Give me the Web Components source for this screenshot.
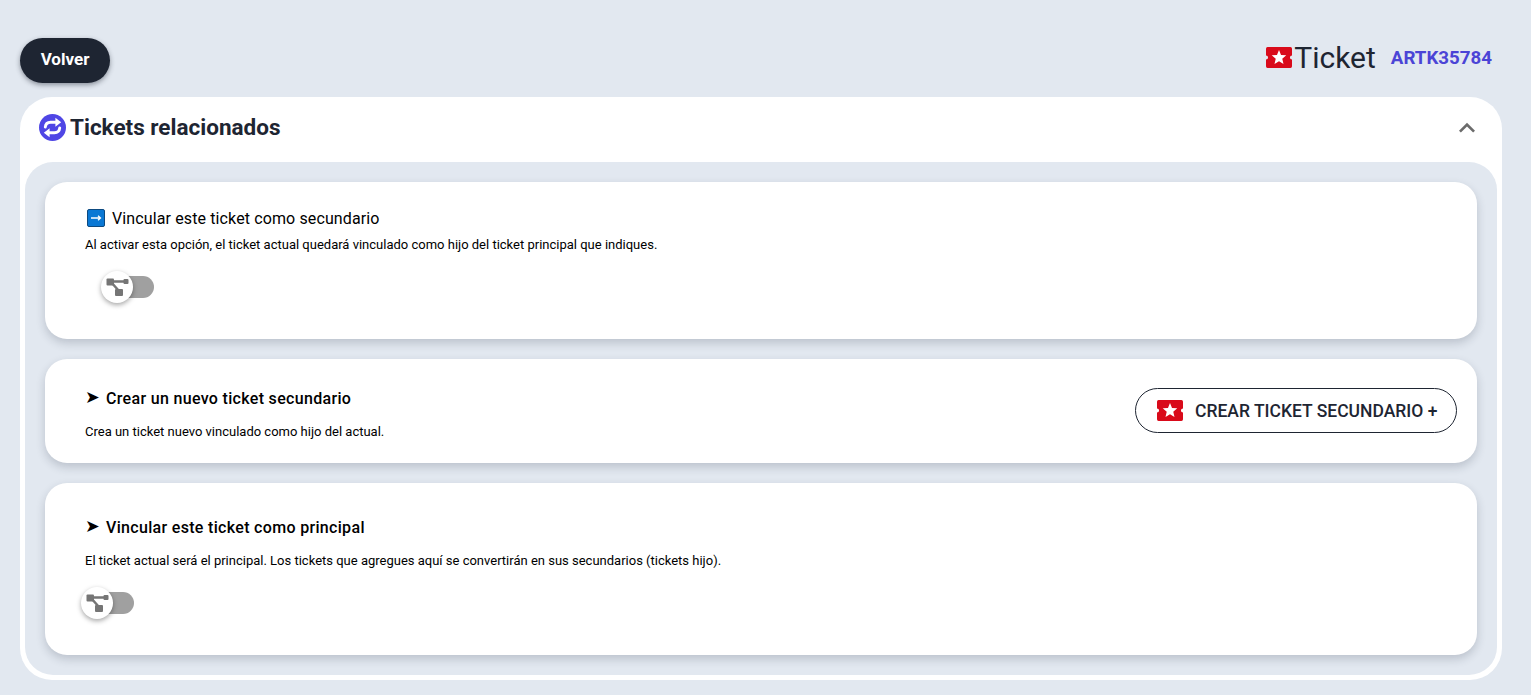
<!DOCTYPE html>
<html lang="es">
<head>
<meta charset="utf-8">
<title>Tickets relacionados</title>
<style>
    html, body { margin: 0; height: 100%; }
    body { background: #e2e8f0; font-family: Roboto, "Liberation Sans", sans-serif; color: #1e2532; overflow: hidden; }
</style>
</head>
<body>
<ticket-page>
    <page-header slot="header" code="ARTK35784"></page-header>
    <related-panel slot="panel" title="Tickets relacionados">
        <link-card heading="Vincular este ticket como secundario" marker="arrow" text="Al activar esta opción, el ticket actual quedará vinculado como hijo del ticket principal que indiques." height="157" top="26" gap="9">
            <link-switch slot="below" shift="21" space="23"></link-switch>
        </link-card>
        <link-card heading="Crear un nuevo ticket secundario" marker="point" text="Crea un ticket nuevo vinculado como hijo del actual." height="104" top="29" gap="16">
            <create-button slot="action"></create-button>
        </link-card>
        <link-card heading="Vincular este ticket como principal" marker="point" text="El ticket actual será el principal. Los tickets que agregues aquí se convertirán en sus secundarios (tickets hijo)." height="172" top="34" gap="16">
            <link-switch slot="below" shift="1" space="23"></link-switch>
        </link-card>
    </related-panel>
</ticket-page>

<script>
const ticketSvg = size => `
    <svg width="${size}" height="${Math.round(size * 0.8)}" viewBox="0 0 25 20" aria-hidden="true" style="display:block;flex:none">
        <path fill="#d90a1a" d="M1.500 0h22a1.500 1.500 0 0 1 1.500 1.500v6.500a2 2 0 0 0 0 4v6.500a1.500 1.500 0 0 1-1.500 1.500h-22A1.500 1.500 0 0 1 0 18.500v-6.500a2 2 0 0 0 0-4v-6.500A1.500 1.500 0 0 1 1.500 0z"/>
        <path fill="#fff" d="M12.500 2.800l1.950 4.700 5.050.4-3.850 3.300 1.180 4.950-4.330-2.650-4.330 2.650 1.180-4.950-3.850-3.300 5.050-.4z"/>
    </svg>`;

class TicketPage extends HTMLElement {
    constructor() {
        super();
        this.attachShadow({ mode: 'open' });
        this.shadowRoot.innerHTML = `
            <style>
                :host { display: flex; flex-direction: column; gap: 14px; padding: 38px 29px 0 20px; }
            </style>
            <slot name="header"></slot>
            <slot name="panel"></slot>
        `;
    }
}

class PageHeader extends HTMLElement {
    constructor() {
        super();
        this.attachShadow({ mode: 'open' });
    }

    connectedCallback() {
        this.shadowRoot.innerHTML = `
            <style>
                :host { display: flex; justify-content: space-between; align-items: flex-start; height: 45px; }
                button {
                    width: 90px; height: 45px; border: 0; border-radius: 23px; padding: 0 0 4px;
                    background: #1e2532; color: #fff; font: 700 17px Roboto, sans-serif;
                    box-shadow: 0 2px 5px rgba(30, 37, 50, .45);
                }
                .title { display: flex; align-items: center; height: 39px; margin-right: 10px; }
                .word { font-size: 30px; font-weight: 400; margin-left: 2px; color: #1e2532; }
                .code { font-size: 18.72px; font-weight: 700; color: #4b44d6; margin-left: 15px; }
            </style>
            <button>Volver</button>
            <div class="title">
                ${ticketSvg(26)}
                <span class="word">Ticket</span>
                <span class="code">${this.getAttribute('code')}</span>
            </div>
        `;
    }
}

class RelatedPanel extends HTMLElement {
    constructor() {
        super();
        this.attachShadow({ mode: 'open' });
    }

    connectedCallback() {
        this.shadowRoot.innerHTML = `
            <style>
                :host { display: block; background: #fff; border-radius: 32px; padding: 0 5px 5px; height: 578px; }
                header { display: flex; align-items: center; height: 61px; margin-bottom: 4px; padding: 0 14px 0 14px; }
                h2 { margin: 0 0 0 4px; font-size: 22.500px; font-weight: 700; color: #1e2532; flex: 1; line-height: 1; }
                .body {
                    display: flex; flex-direction: column; gap: 20px;
                    height: 513px; box-sizing: border-box;
                    background: #e2e8f0; border-radius: 28px; padding: 20px;
                }
            </style>
            <header>
                <svg width="27" height="27" viewBox="0 0 28 28" aria-hidden="true">
                    <circle cx="14" cy="14" r="14" fill="#4f46e5"/>
                    <path fill="none" stroke="#fff" stroke-width="3" stroke-linecap="round" d="M6.500 13.500c.3-3.200 2.600-5 5.500-5h6M21.500 14.500c-.3 3.200-2.600 5-5.500 5h-6"/>
                    <path fill="#fff" d="M17 3.800l6 4.700-6 4.700zM11 14.800l-6 4.700 6 4.700z"/>
                </svg>
                <h2>${this.getAttribute('title')}</h2>
                <svg width="32" height="32" viewBox="0 0 24 24" aria-hidden="true">
                    <path fill="#6b6b6b" d="M12 8l-6 6 1.410 1.410L12 10.830l4.590 4.580L18 14z"/>
                </svg>
            </header>
            <div class="body"><slot></slot></div>
        `;
    }
}

class LinkCard extends HTMLElement {
    constructor() {
        super();
        this.attachShadow({ mode: 'open' });
    }

    connectedCallback() {
        const isPoint = this.getAttribute('marker') !== 'arrow';
        const arrow = `<svg class="mark" width="18" height="18" viewBox="0 0 18 18" aria-hidden="true">
                <rect x=".5" y=".5" width="17" height="17" rx="1.500" fill="#0a78d4" stroke="#0d4a80"/>
                <path fill="none" stroke="#fff" stroke-width="1.300" d="M4 9h9.500M11 6.800l2.500 2.200-2.500 2.200"/>
            </svg>`;
        const marker = isPoint ? '<span class="point">➤</span>' : arrow;

        this.shadowRoot.innerHTML = `
            <style>
                :host {
                    display: flex; align-items: flex-start; flex: none; box-sizing: border-box;
                    height: ${this.getAttribute('height')}px;
                    background: #fff; border-radius: 22px; color: #000;
                    padding: ${this.getAttribute('top')}px 20px 0 40px;
                    box-shadow: 0 4px 10px rgba(30, 41, 59, .2);
                }
                .text { flex: 1; }
                h3 { display: flex; align-items: center; gap: ${isPoint ? 6 : 7}px; margin: 0; height: 20px; font-size: 16px;
                     font-weight: ${isPoint ? 500 : 400}; letter-spacing: ${isPoint ? .32 : .12}px; color: #000; }
                .mark { flex: none; margin-left: 2px; }
                .point { font-family: "DejaVu Sans", sans-serif; font-size: 17.500px; width: 15px; letter-spacing: 0; line-height: 1; }
                p { margin: ${this.getAttribute('gap')}px 0 0; font-size: 13px; line-height: 16px; color: #000; }
            </style>
            <div class="text">
                <h3>${marker}<span>${this.getAttribute('heading')}</span></h3>
                <p>${this.getAttribute('text')}</p>
                <slot name="below"></slot>
            </div>
            <slot name="action"></slot>
        `;
    }
}

class LinkSwitch extends HTMLElement {
    constructor() {
        super();
        this.attachShadow({ mode: 'open' });
    }

    connectedCallback() {
        const shift = Number(this.getAttribute('shift'));
        this.shadowRoot.innerHTML = `
            <style>
                :host { display: block; margin: ${this.getAttribute('space')}px 0 0 ${shift}px; width: 48px; height: 22px; position: relative; }
                .track { height: 22px; border-radius: 11px; background: #a0a0a0; }
                .thumb {
                    position: absolute; left: -5px; top: -5px; width: 32px; height: 32px; border-radius: 50%;
                    background: #fff; box-shadow: 0 2px 5px rgba(0, 0, 0, .35);
                    display: flex; align-items: center; justify-content: center;
                }
            </style>
            <div class="track"></div>
            <div class="thumb">
                <svg width="24" height="24" viewBox="0 0 24 24" aria-hidden="true">
                    <path fill="none" stroke="#757575" stroke-width="2.500" d="M6 6.500h15M6 7l8 9"/>
                    <rect x="1.500" y="3.500" width="7.500" height="7" rx="1" fill="#757575"/>
                    <rect x="18.500" y="4" width="5" height="5" rx="1" fill="#757575"/>
                    <rect x="10" y="14" width="8" height="7" rx="1" fill="#757575"/>
                </svg>
            </div>
        `;
    }
}

class CreateButton extends HTMLElement {
    constructor() {
        super();
        this.attachShadow({ mode: 'open' });
        this.shadowRoot.innerHTML = `
            <style>
                :host {
                    display: flex; align-items: center; gap: 12px; box-sizing: border-box; flex: none;
                    width: 322px; height: 45px; padding-left: 21px;
                    border: 1px solid #1e2532; border-radius: 23px; background: #fff;
                    color: #1e2532; font-size: 17.500px; font-weight: 500;
                }
            </style>
            ${ticketSvg(26)}
            <span>CREAR TICKET SECUNDARIO +</span>
        `;
    }
}

customElements.define('ticket-page', TicketPage);
customElements.define('page-header', PageHeader);
customElements.define('related-panel', RelatedPanel);
customElements.define('link-card', LinkCard);
customElements.define('link-switch', LinkSwitch);
customElements.define('create-button', CreateButton);
</script>
</body>
</html>
